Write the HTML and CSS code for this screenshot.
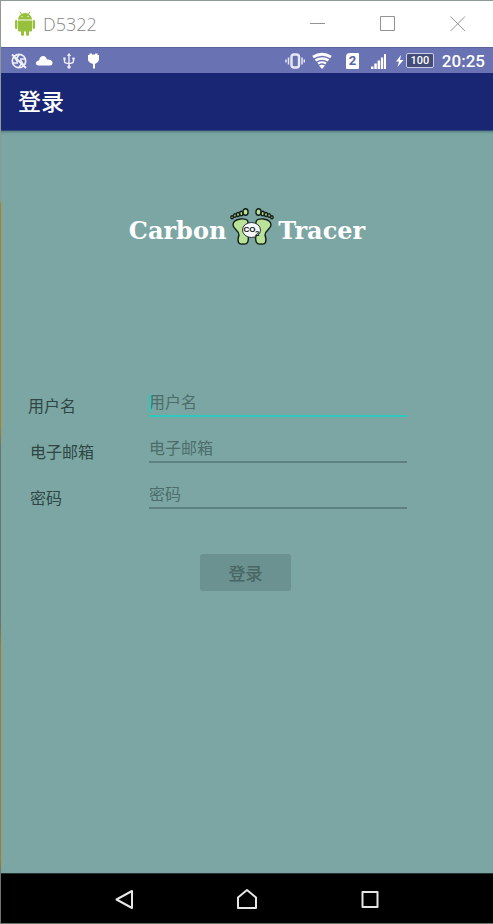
FILE: index.html
```html
<!DOCTYPE html>
<html lang="zh-CN">
<head>
<meta charset="utf-8">
<meta name="viewport" content="width=device-width, initial-scale=1">
<title>D5322</title>
<link rel="stylesheet" href="styles.css">
</head>
<body>
<div class="window">
  <header class="titlebar">
    <svg class="robot" width="22" height="26" viewBox="0 0 22 26" aria-hidden="true">
      <g fill="#97c03d">
        <path d="M4 8.500A7 6.500 0 0 1 18 8.500Z"/>
        <path d="M6 .8 8 4M16 .8 14 4" stroke="#97c03d" stroke-width="1"/>
        <path d="M4 9.500H18V19.500Q18 20.500 17 20.500H5Q4 20.500 4 19.500Z"/>
        <rect x="1" y="9" width="2.400" height="9" rx="1.200"/>
        <rect x="18.600" y="9" width="2.400" height="9" rx="1.200"/>
        <rect x="7" y="18" width="3" height="7" rx="1.400"/>
        <rect x="12" y="18" width="3" height="7" rx="1.400"/>
      </g>
      <circle cx="8" cy="5.600" r=".7" fill="#fff"/><circle cx="14" cy="5.600" r=".7" fill="#fff"/>
    </svg>
    <span class="device">D5322</span>
    <div class="controls">
      <button type="button" aria-label="最小化"><svg width="16" height="16" viewBox="0 0 16 16"><path d="M0 7.500H15"/></svg></button>
      <button type="button" aria-label="最大化"><svg width="16" height="16" viewBox="0 0 16 16"><path d="M.5 .5H14.500V14.500H.5Z"/></svg></button>
      <button type="button" aria-label="关闭"><svg width="16" height="16" viewBox="0 0 16 16"><path d="M.5 .5 15 15M15 .5 .5 15"/></svg></button>
    </div>
  </header>

  <div class="statusbar">
    <div class="notices">
      <svg width="18" height="18" viewBox="0 0 18 18" fill="none" stroke="#eef0fa">
        <circle cx="9" cy="9" r="6.700" stroke-width="1.700"/>
        <path d="M9 2.500 6 7.500M15 7H10M13.500 13 10.500 8M9 15.500 12 11M3 11H8M4.500 5 7.500 10" stroke-width="1.500"/>
        <path d="M2 2.500 16 16" stroke-width="2"/>
      </svg>
      <svg width="18" height="18" viewBox="0 0 18 18" fill="#fff"><path d="M3.500 13.500C0 13.500 0 9 4 8.500C5 3 10.500 2.500 12 7.500C16 7.500 17.500 9 17.500 11C17.500 13 16 13.500 15 13.500Z"/></svg>
      <svg width="18" height="18" viewBox="0 0 18 18" fill="none" stroke="#eef0fa" stroke-width="1.400">
        <path d="M9 3V14M4.500 7V9.500Q4.500 11.500 9 11.500Q13.500 11.500 13.500 9V6.500"/>
        <path d="M9 .8 11 4H7ZM3.300 5.500H5.700V7.500H3.300ZM12.300 5.500H14.700V7.500H12.300Z" fill="#eef0fa" stroke="none"/>
        <circle cx="9" cy="15" r="1.700" fill="#eef0fa" stroke="none"/>
      </svg>
      <svg width="18" height="18" viewBox="0 0 18 18" fill="#fff"><path d="M4.500 1.500H7V2.500H10V1.500H12.500V3H14V8Q13.500 10.500 10 12V16.500H8V12Q3.500 10.500 3 8V3H4.500Z"/></svg>
    </div>
    <div class="signals">
      <svg width="20" height="18" viewBox="0 0 20 18" fill="none" stroke="#e6e8f6">
        <rect x="6.500" y="2.500" width="7.500" height="13" rx="2.500" stroke-width="2.400"/>
        <path d="M3.500 5.500V12.500M17 5.500V12.500M1 7.500V10.500M19.300 7.500V10.500" stroke-width="1.500"/>
      </svg>
      <svg class="wifi" width="20" height="18" viewBox="0 0 20 18" fill="none" stroke="#fff">
        <path d="M1 5Q10-.5 19 5" stroke-width="2.800"/>
        <path d="M3.500 8.400Q10 4.500 16.500 8.400" stroke-width="2.500"/>
        <path d="M6 11.500Q10 9 14 11.500" stroke-width="2.200"/>
        <path d="M7 13.500Q10 12 13 13.500L10 17Z" fill="#fff" stroke="none"/>
      </svg>
      <span class="sim">2</span>
      <svg class="bars" width="16" height="16" viewBox="0 0 16 16" fill="#fff"><path d="M0 13.500H2.500V16H0ZM3.300 10.500H5.800V16H3.300ZM6.600 7.500H9.100V16H6.600ZM9.900 4.500H12.200V16H9.900ZM13 1H15V16H13Z"/></svg>
      <svg width="9" height="14" viewBox="0 0 9 14" fill="#fff"><path d="M6 1 1 7.500H4L2.500 13 8.500 6H5Z"/></svg>
      <span class="battery">100</span>
      <span class="clock">20:25</span>
    </div>
  </div>

  <div class="appbar"><h1>登录</h1></div>

  <main class="content">
    <div class="brand">
      <span>Carbon</span>
      <svg width="44" height="38" viewBox="0 0 44 38" aria-hidden="true">
        <g fill="#b9e298" stroke="#142019" stroke-width="1.400">
          <path d="M3 17C3 10 18 9 18 14C18 18 17 20 18 26C19 33 18 37 13 36C8 37 7 33 9 27C9 22 3 21 3 17Z"/>
          <path d="M41 17C41 10 26 9 26 14C26 18 27 20 26 26C25 33 26 37 31 36C36 37 37 33 35 27C35 22 41 21 41 17Z"/>
          <ellipse cx="15.500" cy="4" rx="2.600" ry="3.200"/><ellipse cx="28.500" cy="4" rx="2.600" ry="3.200"/>
          <ellipse cx="11.300" cy="5.500" rx="1.600" ry="2.200"/><ellipse cx="32.700" cy="5.500" rx="1.600" ry="2.200"/>
          <ellipse cx="8" cy="6.500" rx="1.500" ry="2"/><ellipse cx="36" cy="6.500" rx="1.500" ry="2"/>
          <ellipse cx="4.900" cy="7.600" rx="1.400" ry="1.800"/><ellipse cx="39.100" cy="7.600" rx="1.400" ry="1.800"/>
          <ellipse cx="2.100" cy="9.200" rx="1.200" ry="1.500"/><ellipse cx="41.900" cy="9.200" rx="1.200" ry="1.500"/>
        </g>
        <ellipse cx="21.500" cy="22" rx="9" ry="7.500" fill="#f4f8fa" stroke="#26333a"/>
        <text class="formula" x="13.500" y="24">CO</text>
        <text class="formula" x="25" y="28">2</text>
      </svg>
      <span>Tracer</span>
    </div>

    <form class="login">
      <div class="row first">
        <label for="user">用户名</label>
        <div class="field active"><input id="user" type="text" placeholder="用户名"></div>
      </div>
      <div class="row">
        <label for="mail">电子邮箱</label>
        <div class="field"><input id="mail" type="email" placeholder="电子邮箱"></div>
      </div>
      <div class="row">
        <label for="pass">密码</label>
        <div class="field"><input id="pass" type="password" placeholder="密码"></div>
      </div>
      <button class="submit" type="submit">登录</button>
    </form>
  </main>

  <nav class="navbar">
    <button type="button" aria-label="返回"><svg width="24" height="24" viewBox="0 0 24 24"><path d="M4.500 12.500 20 4V21Z"/></svg></button>
    <button type="button" aria-label="主页"><svg width="24" height="24" viewBox="0 0 24 24"><path d="M3 21V10.500L12 3 21 10.500V21Z"/></svg></button>
    <button type="button" aria-label="最近任务"><svg width="24" height="24" viewBox="0 0 24 24"><path d="M4.500 5H19.500V20H4.500Z"/></svg></button>
  </nav>
</div>
</body>
</html>
```

FILE: styles.css
```css
* { box-sizing: border-box; }

body {
  margin: 0;
  font-family: Roboto, "Noto Sans CJK SC", sans-serif;
}

button {
  margin: 0;
  padding: 0;
  border: 0;
  background: none;
  font: inherit;
}

svg { display: block; }

.window {
  min-height: 100vh;
  display: flex;
  flex-direction: column;
  padding: 1px 0 1px 1px;
  background: linear-gradient(#8d9a96 0 200px, #b57d22 205px 425px, #68766c 450px 620px, #a87a2a 650px 860px, #68766c 875px);
}

.titlebar {
  display: flex;
  align-items: center;
  height: 46px;
  padding-left: 13px;
  background: #fff;
}

.device {
  margin-left: 7px;
  color: #868686;
  font-family: "Open Sans", sans-serif;
  font-size: 18px;
  font-weight: 300;
}

.controls {
  display: flex;
  margin-left: auto;
}

.controls button {
  display: grid;
  place-items: center;
  width: 70px;
  height: 46px;
}

.controls path {
  fill: none;
  stroke: #929292;
  stroke-width: 1;
}

.statusbar {
  display: flex;
  align-items: center;
  justify-content: space-between;
  height: 26px;
  padding: 0 8px 0 9px;
  border-top: 1px solid #5963a0;
  background: #6972b3;
  color: #fff;
}

.notices {
  display: flex;
  gap: 7px;
}

.signals {
  display: flex;
  align-items: center;
}

.wifi { margin-left: 7px; }

.sim {
  width: 13px;
  height: 16px;
  margin-left: 14px;
  border-radius: 4px 1px 1px 1px;
  background: #fff;
  color: #5963a8;
  font-size: 13px;
  font-weight: 700;
  line-height: 16px;
  text-align: center;
}

.bars { margin: 0 8px 0 12px; }

.battery {
  width: 28px;
  height: 15px;
  margin-left: 2px;
  border: 1px solid #c9cde6;
  border-radius: 2px;
  background: #444c78;
  font-size: 11px;
  font-weight: 500;
  line-height: 13px;
  text-align: center;
}

.clock {
  margin-left: 8px;
  font-size: 17px;
  font-weight: 500;
  line-height: 24px;
}

.appbar {
  display: flex;
  align-items: center;
  height: 58px;
  padding: 0 17px 4px;
  border-bottom: 1px solid #304b78;
  background: #192673;
}

.appbar h1 {
  margin: 0;
  color: #fff;
  font-size: 23px;
  font-weight: 500;
}

.content {
  flex: 1;
  padding-top: 77px;
  background: #7ba6a3;
  box-shadow: inset 0 3px 3px -2px #4f7a79;
}

.brand {
  display: flex;
  align-items: center;
  justify-content: center;
  gap: 4px;
  height: 38px;
  color: #fff;
  font-family: "DejaVu Serif", serif;
  font-size: 24px;
  font-weight: 700;
  line-height: 38px;
}

.brand span { padding-top: 8px; }

.formula {
  fill: #111;
  font-family: "Liberation Sans", sans-serif;
  font-size: 8px;
  font-weight: 700;
}

.login {
  display: flex;
  flex-direction: column;
  gap: 16px;
  padding: 141px 3px 0 0;
}

.row {
  display: flex;
  height: 30px;
  padding: 0 83px 0 29px;
}

.row label {
  width: 119px;
  padding-top: 8px;
  color: #2f4644;
  font-size: 16px;
  line-height: 24px;
}

.row.first { padding-left: 27px; }
.row.first label { width: 121px; }

.field {
  position: relative;
  flex: 1;
  min-width: 0;
  border-bottom: 2px solid #5d8180;
}

.field.active { border-color: #2ac9bb; }

.field.active::before {
  content: "";
  position: absolute;
  top: 7px;
  bottom: 2px;
  left: 0;
  width: 2px;
  background: #2ac9bb;
}

.field input {
  display: block;
  width: 100%;
  height: 28px;
  padding: 3px 0 0;
  border: 0;
  outline: 0;
  background: none;
  color: #2f4644;
  font: inherit;
  font-size: 16px;
}

.field input::placeholder {
  color: #4d6d6a;
  opacity: 1;
}

.submit {
  align-self: center;
  width: 91px;
  height: 37px;
  margin-top: 29px;
  border-radius: 3px;
  background: #6b9190;
  color: #486663;
  font-size: 17px;
  font-weight: 500;
}

.navbar {
  display: flex;
  align-items: center;
  justify-content: center;
  gap: 99px;
  height: 50px;
  border-top: 1px solid #243332;
  background: #000;
}

.navbar path {
  fill: none;
  stroke: #e6e6e6;
  stroke-width: 2;
  stroke-linejoin: round;
}
```
